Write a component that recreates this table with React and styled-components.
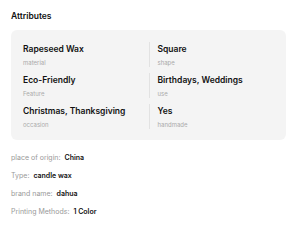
import styled, { createGlobalStyle } from "styled-components"

const Global = createGlobalStyle`
    body {
        margin: 0;
        background: #fff;
        font-family: Inter, "Noto Sans", sans-serif;
        color: #111;
    }
`

let Page = styled.div`
    width: 300px;
    padding: 10px 11px 0 11px;
    box-sizing: border-box;
`
let Title = styled.h2`
    margin: 0 0 8px 0;
    font-size: 8.5px;
    font-weight: 600;
    line-height: 12px;
    color: #111;
`
let Card = styled.div`
    width: 275px;
    box-sizing: border-box;
    background: #f4f4f4;
    border-radius: 6px;
    padding: 12px 12px 11px 12px;
    display: grid;
    grid-template-columns: 1fr 1fr;
    row-gap: 6px;
`
let Item = styled.div`
    display: flex;
    flex-direction: column;
    gap: 2px;
    padding-left: ${p => (p.right ? "8px" : "0")};
    border-left: ${p => (p.right ? "1px solid #e2e2e2" : "none")};
`
let Value = styled.div`
    font-size: 8.5px;
    font-weight: 600;
    line-height: 14px;
    color: #111;
    white-space: nowrap;
`
let Label = styled.div`
    font-size: 6px;
    line-height: 9px;
    color: #aaa;
`
let List = styled.div`
    display: flex;
    flex-direction: column;
    gap: 7px;
    padding-top: 12px;
`
let Line = styled.div`
    font-size: 7px;
    line-height: 11px;
    color: #999;
    b {
        color: #111;
        font-weight: 600;
        margin-left: 4px;
    }
`

const attrs = [
    { value: "Rapeseed Wax", label: "material" },
    { value: "Square", label: "shape" },
    { value: "Eco-Friendly", label: "Feature" },
    { value: "Birthdays, Weddings", label: "use" },
    { value: "Christmas, Thanksgiving", label: "occasion" },
    { value: "Yes", label: "handmade" },
]

const details = [
    ["place of origin:", "China"],
    ["Type:", "candle wax"],
    ["brand name:", "dahua"],
    ["Printing Methods:", "1 Color"],
]

export default function App() {
    return (
        <Page>
            <Global />
            <Title>Attributes</Title>
            <Card>
                {attrs.map((a, i) => (
                    <Item key={i} right={i % 2 === 1}>
                        <Value>{a.value}</Value>
                        <Label>{a.label}</Label>
                    </Item>
                ))}
            </Card>
            <List>
                {details.map(([k, v]) => (
                    <Line key={k}>{k}<b>{v}</b></Line>
                ))}
            </List>
        </Page>
    )
}
